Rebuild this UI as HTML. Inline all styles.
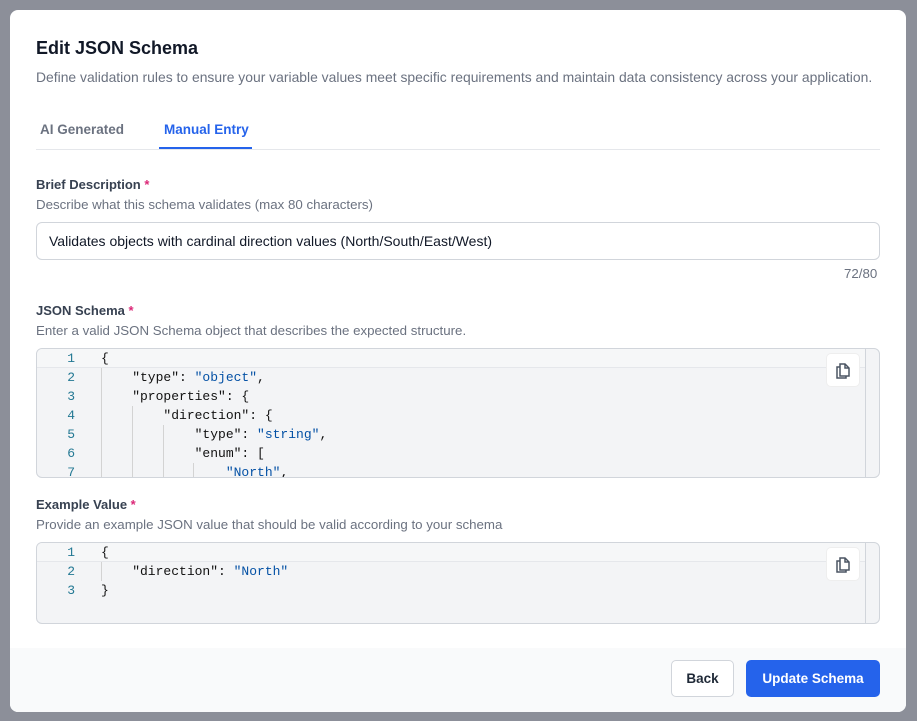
<!DOCTYPE html>
<html><head><style>
*{box-sizing:border-box;margin:0;padding:0}
body{width:917px;height:721px;background:#8c8f99;font-family:"Liberation Sans",sans-serif;position:relative;overflow:hidden}
.modal{position:absolute;left:10px;top:10px;width:896px;height:702px;background:#fff;border-radius:8px;overflow:hidden}
.abs{position:absolute}
h1{position:absolute;left:26px;top:28px;font-size:18px;font-weight:600;color:#111827}
.sub{left:26px;top:59px;font-size:13.9px;color:#6b7280}
.tabs{left:26px;top:139px;width:844px;height:1px;background:#e5e7eb}
.tab{top:112px;font-size:13.5px;font-weight:600}
.lbl{font-size:13px;font-weight:600;color:#374151;left:26px}
.lbl span{color:#db2777}
.hint{font-size:13.3px;color:#6b7280;left:26px}
.input{left:26px;top:212px;width:844px;height:38px;border:1px solid #d1d5db;border-radius:6px;padding:0 12px;line-height:36px;font-size:14px;color:#111827}
.ed{left:26px;width:844px;border:1px solid #d1d5db;border-radius:6px;background:#f3f4f6;overflow:hidden;font-family:"Liberation Mono",monospace;font-size:13px}
.ed .cur{position:absolute;left:0;right:14px;top:0;height:19px;border-bottom:1px solid #e5e7eb;background:#f6f7f8}
.ed .sb{position:absolute;right:0;top:0;bottom:0;width:14px;border-left:1px solid #d1d5db}
.cd{position:absolute;left:64px;white-space:pre;color:#111}
.s{color:#0451a5}
.g{position:absolute;width:1px;background:#d3d3d3}
.copy{position:absolute;right:20px;top:5px;width:32px;height:32px;background:#fff;border-radius:4px;box-shadow:0 0 0 1px #eee}
.foot{left:0;top:638px;width:896px;height:64px;background:#f9fafb}
.btn{top:650px;height:37px;border-radius:5px;font-size:13.5px;font-weight:600;text-align:center;line-height:37px}
</style></head><body>
<div class="modal">
<h1>Edit JSON Schema</h1>
<div class="abs sub">Define validation rules to ensure your variable values meet specific requirements and maintain data consistency across your application.</div>
<div class="abs tab" style="left:30px;color:#6b7280">AI Generated</div>
<div class="abs tab" style="left:154px;color:#2563eb">Manual Entry</div>
<div class="abs tabs"></div>
<div class="abs" style="left:149px;top:137px;width:93px;height:2px;background:#2563eb"></div>

<div class="abs lbl" style="top:167px">Brief Description <span>*</span></div>
<div class="abs hint" style="top:187px">Describe what this schema validates (max 80 characters)</div>
<div class="abs input">Validates objects with cardinal direction values (North/South/East/West)</div>
<div class="abs hint" style="top:256px;left:834px">72/80</div>

<div class="abs lbl" style="top:293px">JSON Schema <span>*</span></div>
<div class="abs hint" style="top:313px">Enter a valid JSON Schema object that describes the expected structure.</div>
<div class="abs ed" style="top:338px;height:130px">
<div class="cur"></div><div class="sb"></div>
<div class="g" style="left:64px;top:19px;height:111px"></div>
<div class="g" style="left:95px;top:57px;height:73px"></div>
<div class="g" style="left:126px;top:76px;height:54px"></div>
<div class="g" style="left:156px;top:114px;height:16px"></div>
<div style="position:absolute;top:0;left:0;width:38px;text-align:right;color:#237893;line-height:19px">1<br>2<br>3<br>4<br>5<br>6<br>7</div>
<div class="cd" style="top:0;line-height:19px">{
    "type": <span class="s">"object"</span>,
    "properties": {
        "direction": {
            "type": <span class="s">"string"</span>,
            "enum": [
                <span class="s">"North"</span>,</div>
<div class="copy"><svg width="32" height="32" viewBox="0 0 32 32" fill="none" stroke="#4b5563" stroke-width="1.5"><path d="M13 10h5l4 4v8h-9z"/><path d="M18 10v4h4"/><path d="M13 13h-3v11h9v-2"/></svg></div>
</div>

<div class="abs lbl" style="top:487px">Example Value <span>*</span></div>
<div class="abs hint" style="top:507px">Provide an example JSON value that should be valid according to your schema</div>
<div class="abs ed" style="top:532px;height:82px">
<div class="cur"></div><div class="sb"></div>
<div class="g" style="left:64px;top:19px;height:19px"></div>
<div style="position:absolute;top:0;left:0;width:38px;text-align:right;color:#237893;line-height:19px">1<br>2<br>3</div>
<div class="cd" style="top:0;line-height:19px">{
    "direction": <span class="s">"North"</span>
}</div>
<div class="copy"><svg width="32" height="32" viewBox="0 0 32 32" fill="none" stroke="#4b5563" stroke-width="1.5"><path d="M13 10h5l4 4v8h-9z"/><path d="M18 10v4h4"/><path d="M13 13h-3v11h9v-2"/></svg></div>
</div>

<div class="abs foot"></div>
<div class="abs btn" style="left:661px;width:63px;border:1px solid #d1d5db;background:#fff;color:#1f2937;line-height:35px">Back</div>
<div class="abs btn" style="left:736px;width:134px;background:#2563eb;color:#fff">Update Schema</div>
</div>
</body></html>
